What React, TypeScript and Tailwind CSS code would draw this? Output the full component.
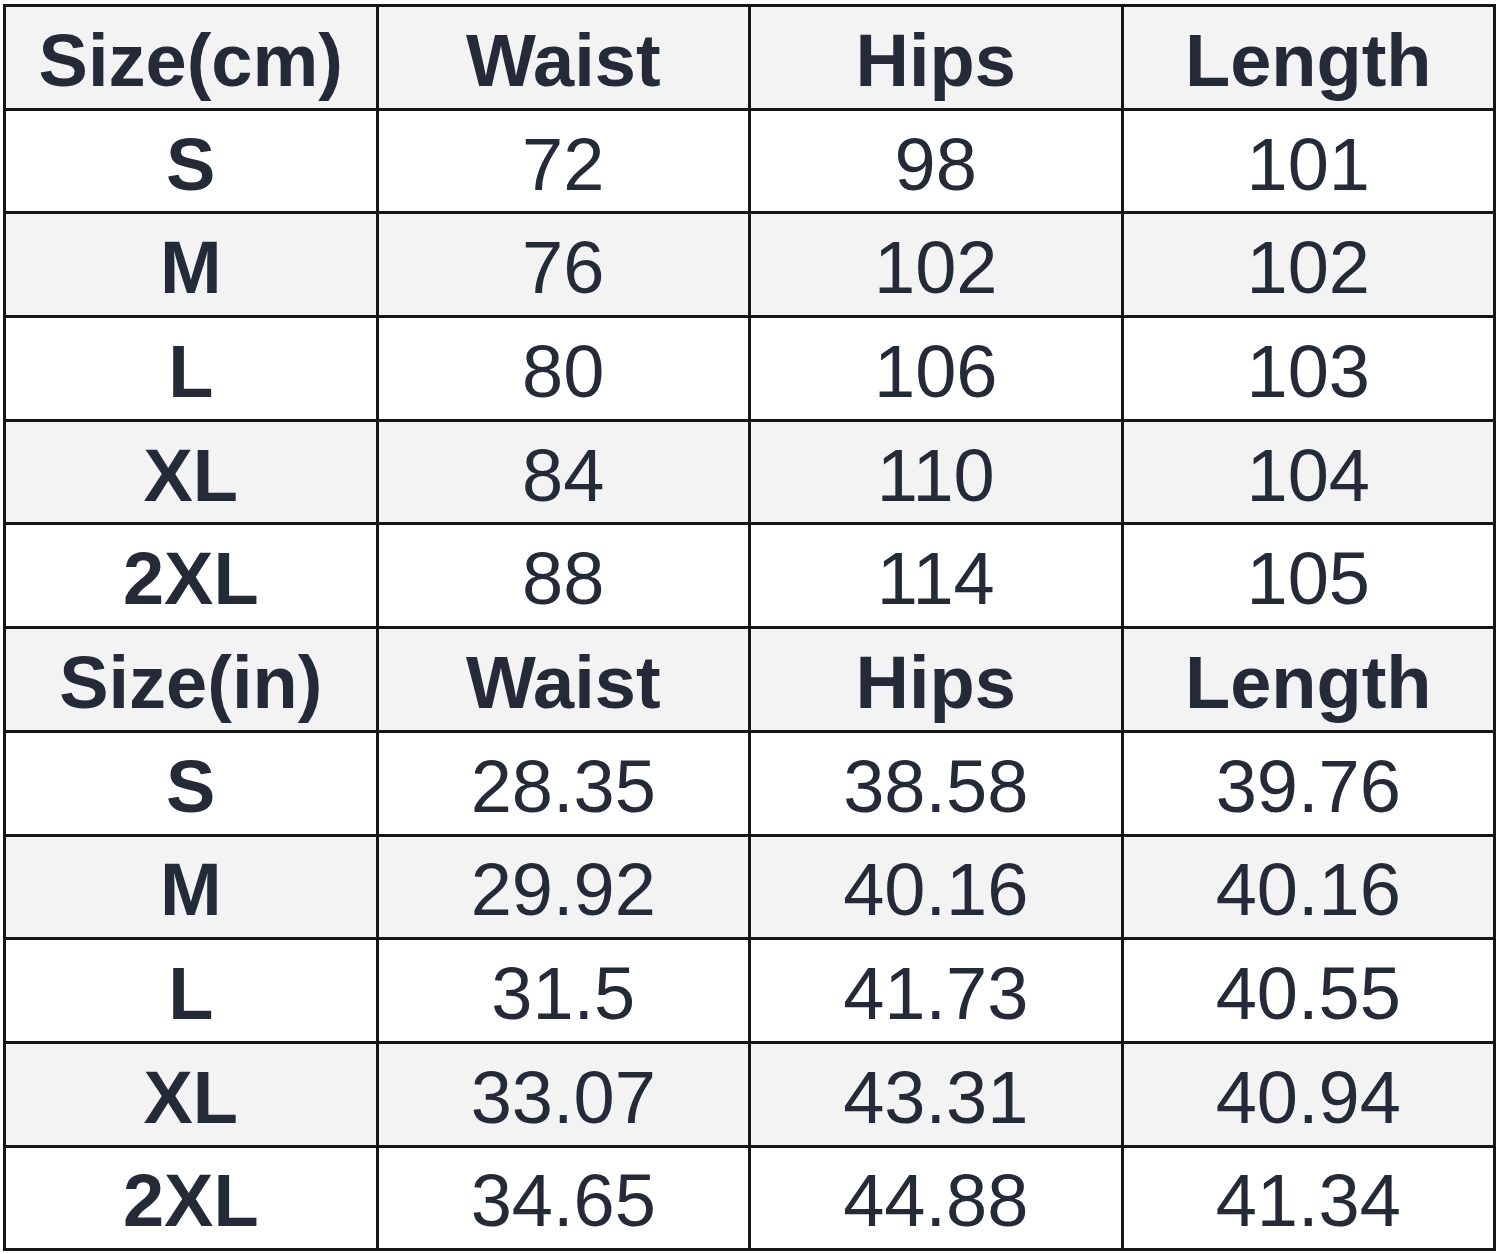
const HEAD = ['Waist', 'Hips', 'Length'];

const CM: [string, string, string, string][] = [
  ['S', '72', '98', '101'],
  ['M', '76', '102', '102'],
  ['L', '80', '106', '103'],
  ['XL', '84', '110', '104'],
  ['2XL', '88', '114', '105'],
];

const IN: [string, string, string, string][] = [
  ['S', '28.35', '38.58', '39.76'],
  ['M', '29.92', '40.16', '40.16'],
  ['L', '31.5', '41.73', '40.55'],
  ['XL', '33.07', '43.31', '40.94'],
  ['2XL', '34.65', '44.88', '41.34'],
];

const cell = 'border-[3px] border-[#161616] p-0 pt-[7px] text-center align-middle leading-none';

function Block({ unit, rows }: { unit: string; rows: [string, string, string, string][] }) {
  return (
    <>
      <tr className="h-[103.7px] bg-[#f3f3f3]">
        <th className={`${cell} font-bold`}>{`Size(${unit})`}</th>
        {HEAD.map((h) => (
          <th key={h} className={`${cell} font-bold`}>
            {h}
          </th>
        ))}
      </tr>
      {rows.map((r, i) => (
        <tr key={r[0]} className={`h-[103.7px] ${i % 2 === 1 ? 'bg-[#f3f3f3]' : 'bg-white'}`}>
          <td className={`${cell} font-bold`}>{r[0]}</td>
          <td className={cell}>{r[1]}</td>
          <td className={cell}>{r[2]}</td>
          <td className={cell}>{r[3]}</td>
        </tr>
      ))}
    </>
  );
}

export default function App() {
  return (
    <div className="h-[1254px] w-[1500px] bg-white pl-[3px] pt-[4px]">
      <table
        className="w-[1493px] table-fixed border-collapse text-[74px] text-[#252a38]"
        style={{ fontFamily: '"Liberation Sans", Arial, sans-serif' }}
      >
        <tbody>
          <Block unit="cm" rows={CM} />
          <Block unit="in" rows={IN} />
        </tbody>
      </table>
    </div>
  );
}
